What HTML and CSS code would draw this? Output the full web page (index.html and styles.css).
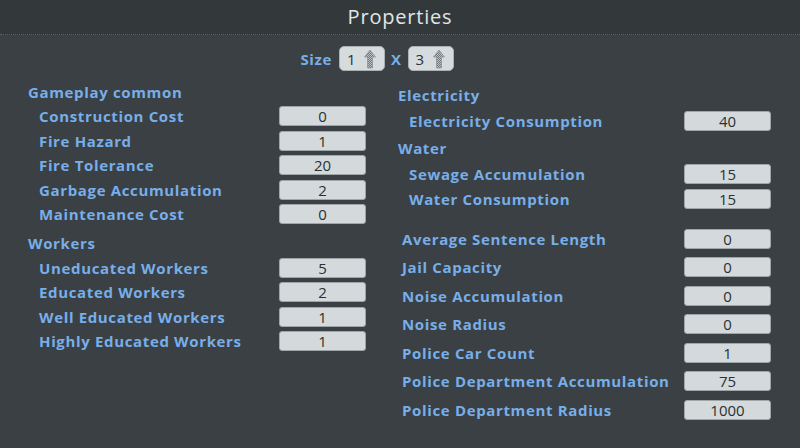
FILE: index.html
```html
<!DOCTYPE html>
<html>
<head>
<meta charset="utf-8">
<link rel="stylesheet" href="styles.css">
</head>
<body>
<div class="panel">
  <div class="header"><span class="title">Properties</span></div>
  <div class="size-row">
    <span class="lbl">Size</span>
    <div class="spin"><span>1</span><svg class="arrow" viewBox="0 0 12 20" width="12" height="20"><path d="M6 1 L11.5 8 L8.5 8 L8.5 19 L3.5 19 L3.5 8 L0.5 8 Z" fill="url(#hatch)" stroke="#8d969a" stroke-width="0.8"/></svg></div>
    <span class="lbl x">X</span>
    <div class="spin"><span>3</span><svg class="arrow" viewBox="0 0 12 20" width="12" height="20"><path d="M6 1 L11.5 8 L8.5 8 L8.5 19 L3.5 19 L3.5 8 L0.5 8 Z" fill="url(#hatch)" stroke="#8d969a" stroke-width="0.8"/></svg></div>
    <svg width="0" height="0" class="defs"><defs><pattern id="hatch" width="2" height="2" patternUnits="userSpaceOnUse"><rect width="2" height="2" fill="#b9c0c3"/><rect width="1" height="1" fill="#6f787c"/><rect x="1" y="1" width="1" height="1" fill="#6f787c"/></pattern></defs></svg>
  </div>
  <div class="cols">
    <div class="col left">
      <div class="head">Gameplay common</div>
      <div class="row"><span class="name">Construction Cost</span><span class="val">0</span></div>
      <div class="row"><span class="name">Fire Hazard</span><span class="val">1</span></div>
      <div class="row"><span class="name">Fire Tolerance</span><span class="val">20</span></div>
      <div class="row"><span class="name">Garbage Accumulation</span><span class="val">2</span></div>
      <div class="row"><span class="name">Maintenance Cost</span><span class="val">0</span></div>
      <div class="head gap">Workers</div>
      <div class="row"><span class="name">Uneducated Workers</span><span class="val">5</span></div>
      <div class="row"><span class="name">Educated Workers</span><span class="val">2</span></div>
      <div class="row"><span class="name">Well Educated Workers</span><span class="val">1</span></div>
      <div class="row"><span class="name">Highly Educated Workers</span><span class="val">1</span></div>
    </div>
    <div class="col right">
      <div class="head">Electricity</div>
      <div class="row r1"><span class="name">Electricity Consumption</span><span class="val">40</span></div>
      <div class="head water">Water</div>
      <div class="row"><span class="name">Sewage Accumulation</span><span class="val">15</span></div>
      <div class="row"><span class="name">Water Consumption</span><span class="val">15</span></div>
      <div class="plain">
        <div class="row"><span class="name">Average Sentence Length</span><span class="val">0</span></div>
        <div class="row"><span class="name">Jail Capacity</span><span class="val">0</span></div>
        <div class="row"><span class="name">Noise Accumulation</span><span class="val">0</span></div>
        <div class="row"><span class="name">Noise Radius</span><span class="val">0</span></div>
        <div class="row"><span class="name">Police Car Count</span><span class="val">1</span></div>
        <div class="row"><span class="name">Police Department Accumulation</span><span class="val">75</span></div>
        <div class="row"><span class="name">Police Department Radius</span><span class="val">1000</span></div>
      </div>
    </div>
  </div>
</div>
</body>
</html>
```
FILE: styles.css
```css
html, body { margin: 0; padding: 0; }
body {
  width: 800px;
  height: 448px;
  overflow: hidden;
  background: #3a4043;
  font-family: "Open Sans", "DejaVu Sans", sans-serif;
}
.panel { width: 800px; height: 448px; }
.header {
  height: 34px;
  background: #33393b;
  border-bottom: 1px dotted #566064;
  display: flex;
  align-items: center;
  justify-content: center;
}
.title {
  color: #e2e6e7;
  font-size: 20px;
  letter-spacing: 0.8px;
  line-height: 1;
}
.size-row {
  display: flex;
  align-items: center;
  justify-content: center;
  height: 25px;
  margin-top: 11px;
  padding-right: 46px;
}
.lbl {
  color: #78aee9;
  font-weight: 700;
  font-size: 15px;
  letter-spacing: 0.6px;
}
.lbl.x { margin: 0 6px 0 6px; }
.size-row > .lbl:first-child { margin-right: 7px; }
.spin {
  width: 46px;
  height: 25px;
  box-sizing: border-box;
  background: #d6dcdd;
  border: 1px solid #a9b1b3;
  border-radius: 5px;
  display: flex;
  align-items: center;
  justify-content: space-between;
  padding: 0 8px 0 7px;
  color: #2b3033;
  font-size: 15px;
}
.arrow { display: block; }
.defs { position: absolute; }
.cols {
  display: flex;
  margin-top: 8px;
}
.col.left { margin-left: 28px; width: 338px; }
.col.right { margin-left: 32px; width: 373px; padding-top: 3px; }
.head {
  height: 25px;
  display: flex;
  align-items: center;
  color: #78aee9;
  font-weight: 700;
  font-size: 15px;
  letter-spacing: 0.65px;
}
.head.gap { margin-top: 4px; }
.row {
  height: 24.5px;
  display: flex;
  align-items: center;
  justify-content: space-between;
  padding-left: 11px;
}
.name {
  color: #78aee9;
  font-weight: 700;
  font-size: 15px;
  letter-spacing: 0.65px;
}
.val {
  width: 87px;
  height: 20px;
  box-sizing: border-box;
  background: #d4dadb;
  border: 1px solid #9ea6a8;
  border-radius: 3px;
  color: #2b3033;
  font-size: 15px;
  line-height: 18px;
  text-align: center;
}
.right .r1 { height: 26px; margin-top: 1px; }
.head.water { height: 28px; }
.plain { margin-top: 13.5px; }
.plain .row { height: 28.5px; padding-left: 4px; }
```
